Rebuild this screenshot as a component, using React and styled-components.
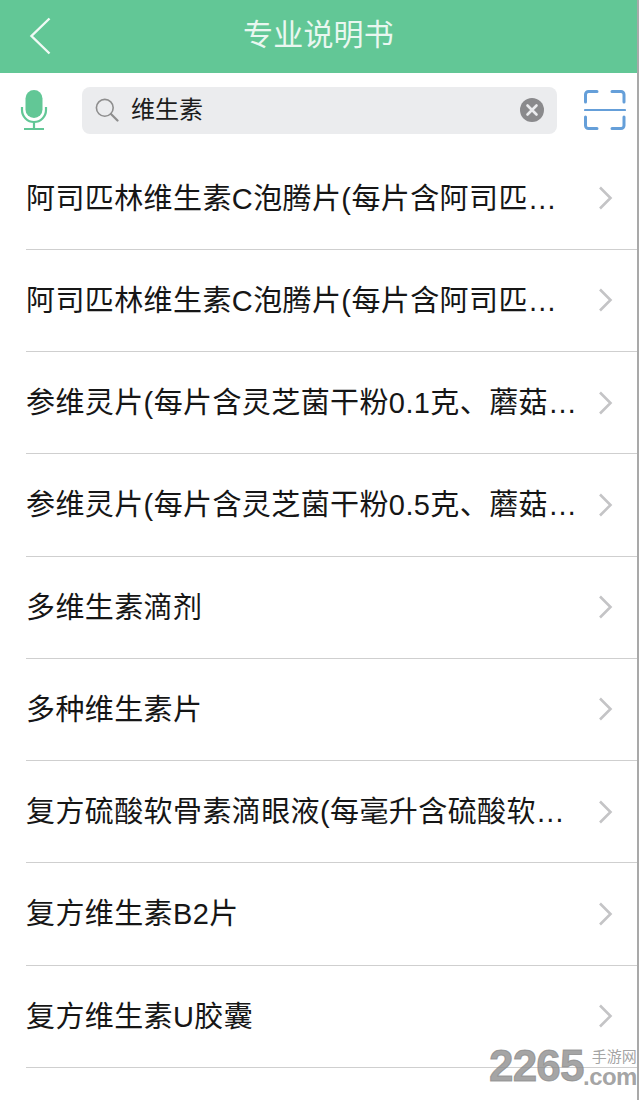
import React from "react";
import styled, { createGlobalStyle } from "styled-components";

const GlobalStyle = createGlobalStyle`
  html, body {
    margin: 0;
    padding: 0;
    background: #fff;
    font-family: "Liberation Sans", "Noto Sans CJK SC", sans-serif;
  }
`;

const Page = styled.div`
  position: relative;
  width: 639px;
  height: 1100px;
  overflow: hidden;
  box-sizing: border-box;
  border-right: 2px solid #a9a9a9;
  background: #fff;
`;

const Header = styled.div`
  display: flex;
  align-items: center;
  justify-content: center;
  height: 73px;
  background: #62c796;
  position: relative;
`;

const BackButton = styled.svg`
  position: absolute;
  left: 29px;
  top: 17px;
  width: 24px;
  height: 38px;
`;

const Title = styled.div`
  color: #e9f7f0;
  font-size: 30px;
  line-height: 70px;
  height: 73px;
  letter-spacing: 0.2px;
`;

const SearchRow = styled.div`
  display: flex;
  align-items: center;
  height: 74.6px;
  padding-left: 20px;
  box-sizing: border-box;
`;

const IconSlot = styled.div`
  display: flex;
  width: 62px;
  flex: none;
`;

const SearchBox = styled.div`
  display: flex;
  align-items: center;
  width: 475px;
  height: 47px;
  padding: 0 13.5px 0 13px;
  box-sizing: border-box;
  border-radius: 8px;
  background: #ebecee;
`;

const Query = styled.div`
  flex: 1;
  margin-left: 12px;
  font-size: 24px;
  line-height: 45px;
  height: 47px;
  color: #1c1c1c;
`;

const ScanSlot = styled.div`
  display: flex;
  margin-left: 27px;
`;

const List = styled.div`
  display: flex;
  flex-direction: column;
`;

const Row = styled.div`
  display: flex;
  align-items: center;
  height: 102.25px;
  margin-left: 26px;
  box-sizing: border-box;
  border-bottom: 1px solid #cfcfcf;
`;

const RowText = styled.div`
  flex: 1;
  font-size: 29px;
  line-height: 40px;
  letter-spacing: 0.4px;
  padding-top: 1px;
  color: #161616;
  white-space: nowrap;
`;

const Chevron = styled.svg`
  width: 15px;
  height: 24px;
  margin-right: 24px;
  flex: none;
`;

const Watermark = styled.div`
  position: absolute;
  left: 489px;
  top: 1043px;
  display: flex;
  align-items: flex-end;
  color: rgba(140, 140, 140, 0.8);
`;

const MarkNumber = styled.div`
  font-weight: 700;
  font-size: 44px;
  line-height: 46px;
  letter-spacing: -0.8px;
  -webkit-text-stroke: 1px rgba(140, 140, 140, 0.8);
`;

const MarkSide = styled.div`
  display: flex;
  flex-direction: column;
  align-items: flex-end;
  width: 52px;
  margin-left: 1px;
`;

const MarkName = styled.div`
  font-size: 15px;
  line-height: 17px;
`;

const MarkDomain = styled.div`
  font-weight: 700;
  font-size: 24px;
  line-height: 24px;
  letter-spacing: -0.6px;
`;

const items = [
  "阿司匹林维生素C泡腾片(每片含阿司匹…",
  "阿司匹林维生素C泡腾片(每片含阿司匹…",
  "参维灵片(每片含灵芝菌干粉0.1克、蘑菇…",
  "参维灵片(每片含灵芝菌干粉0.5克、蘑菇…",
  "多维生素滴剂",
  "多种维生素片",
  "复方硫酸软骨素滴眼液(每毫升含硫酸软…",
  "复方维生素B2片",
  "复方维生素U胶囊",
];

function MicIcon() {
  return (
    <svg width="28" height="42" viewBox="0 0 28 42">
      <rect x="5.5" y="1" width="17" height="28" rx="8.5" fill="#62c796" />
      <path d="M2 18v3a12 12 0 0 0 24 0v-3" fill="none" stroke="#62c796" strokeWidth="2.2" />
      <path d="M14 33v7M4 40h20" fill="none" stroke="#62c796" strokeWidth="2.2" />
    </svg>
  );
}

function SearchIcon() {
  return (
    <svg width="24" height="24" viewBox="0 0 24 24">
      <circle cx="9.8" cy="9.8" r="8.4" fill="none" stroke="#8e8e8e" strokeWidth="1.6" />
      <path d="M16 16l6.5 6.5" stroke="#8e8e8e" strokeWidth="2.2" strokeLinecap="round" />
    </svg>
  );
}

function ClearIcon() {
  return (
    <svg width="24" height="24" viewBox="0 0 24 24">
      <circle cx="12" cy="12" r="12" fill="#8a8a8c" />
      <path d="M7.5 7.5l9 9M16.5 7.5l-9 9" stroke="#ebecee" strokeWidth="2.6" strokeLinecap="round" />
    </svg>
  );
}

function ScanIcon() {
  return (
    <svg width="42" height="42" viewBox="0 0 42 42">
      <g fill="none" stroke="#659fd9" strokeLinecap="round">
        <g strokeWidth="3">
          <path d="M13 2.5H4.5a3 3 0 0 0-3 3V13" />
          <path d="M28 2.5h9a3 3 0 0 1 3 3V13" />
          <path d="M13 39.5H4.5a3 3 0 0 1-3-3V28" />
          <path d="M28 39.5h9a3 3 0 0 0 3-3V28" />
        </g>
        <path d="M1 21h40" strokeWidth="2.2" />
      </g>
    </svg>
  );
}

export default function App() {
  return (
    <Page>
      <GlobalStyle />
      <Header>
        <BackButton viewBox="0 0 24 38">
          <path d="M20.5 1.5L2.5 19l18 17.5" fill="none" stroke="#f1faf5" strokeWidth="2.4" />
        </BackButton>
        <Title>专业说明书</Title>
      </Header>
      <SearchRow>
        <IconSlot>
          <MicIcon />
        </IconSlot>
        <SearchBox>
          <SearchIcon />
          <Query>维生素</Query>
          <ClearIcon />
        </SearchBox>
        <ScanSlot>
          <ScanIcon />
        </ScanSlot>
      </SearchRow>
      <List>
        {items.map((text, i) => (
          <Row key={i}>
            <RowText>{text}</RowText>
            <Chevron viewBox="0 0 15 24">
              <path d="M2 1.5L12.5 12 2 22.5" fill="none" stroke="#c4c4c6" strokeWidth="2.6" />
            </Chevron>
          </Row>
        ))}
      </List>
      <Watermark>
        <MarkNumber>2265</MarkNumber>
        <MarkSide>
          <MarkName>手游网</MarkName>
          <MarkDomain>.com</MarkDomain>
        </MarkSide>
      </Watermark>
    </Page>
  );
}
